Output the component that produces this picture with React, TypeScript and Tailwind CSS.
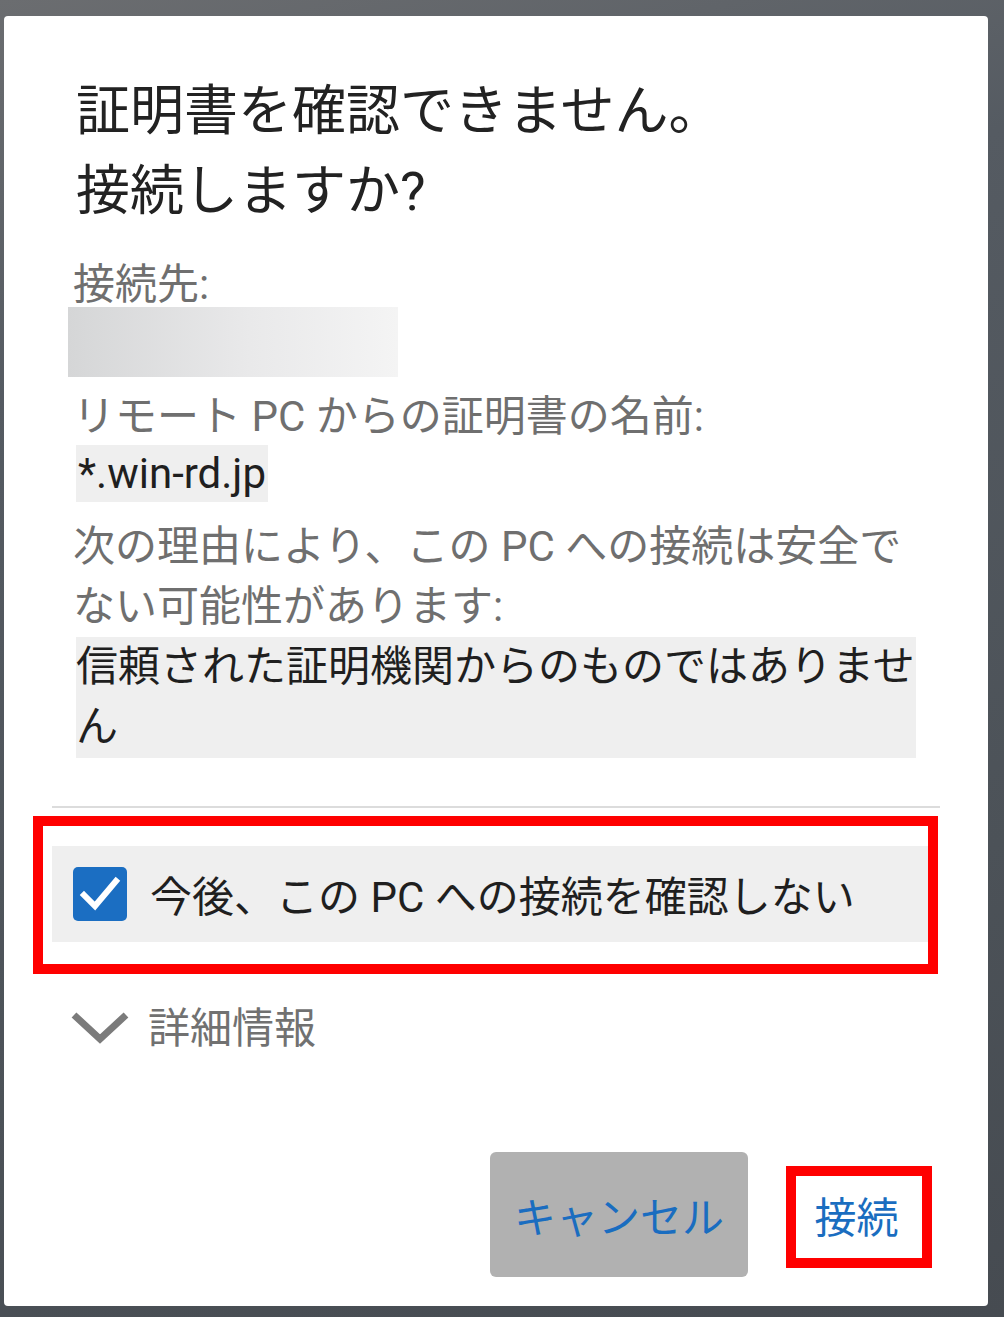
const font = { fontFamily: 'Roboto, "Noto Sans CJK JP", sans-serif' };

function CheckIcon() {
  return (
    <svg width="54" height="54" viewBox="0 0 54 54">
      <rect x="0" y="0" width="54" height="54" rx="5" fill="#1b6ec2" />
      <polyline points="11,28 22,39 43,14" fill="none" stroke="#fff" strokeWidth="6" strokeLinecap="square" />
    </svg>
  );
}

function Chevron() {
  return (
    <svg width="60" height="34" viewBox="0 0 60 34">
      <polyline points="4,5 30,29 56,5" fill="none" stroke="#7b7b7b" strokeWidth="7" />
    </svg>
  );
}

export default function App() {
  return (
    <div
      className="w-[1004px] h-[1317px] pt-[16px] pl-[4px] bg-[linear-gradient(165deg,#6b6d70,#555b62_25%,#4c5258_70%,#464b51)]"
      style={font}
    >
      <div className="w-[984px] h-[1290px] bg-white rounded-[4px] flex flex-col">
        <div className="pt-[56px] px-[72px]">
          <h1 className="text-[54px] leading-[80px] text-[#222222] font-normal">
            証明書を確認できません。
            <br />
            接続しますか?
          </h1>

          <div className="mt-[31px] -ml-[3px] text-[42px] leading-[44px] text-[#6f6f6f]">接続先:</div>
          <div className="-ml-[8px] w-[330px] h-[70px] bg-[linear-gradient(90deg,#d5d6d7,#e9e9ea_55%,#f4f4f4)]" />

          <div className="mt-[12px] -ml-[3px] text-[42px] leading-[56px] text-[#6f6f6f]">リモート PC からの証明書の名前:</div>
          <div className="inline-block h-[57px] px-[2px] bg-[#efefef] text-[42px] leading-[57px] text-[#1f1f1f]">*.win-rd.jp</div>

          <div className="mt-[15px] -ml-[3px] text-[42px] leading-[60px] text-[#6f6f6f]">
            次の理由により、この PC への接続は安全でない可能性があります:
          </div>
          <div className="bg-[#efefef] text-[42px] leading-[60px] text-[#1f1f1f] pb-[1px]">
            信頼された証明機関からのものではありません
          </div>
        </div>

        <div className="mt-[48px] mx-[48px] h-[2px] bg-[#dcdcdc]" />

        <div className="relative mt-[38px] ml-[48px] mr-[54px] h-[96px] bg-[#efefef] flex items-center">
          <div className="ml-[21px]">
            <CheckIcon />
          </div>
          <span className="ml-[23px] pt-[6px] text-[42px] text-[#1f1f1f]">今後、この PC への接続を確認しない</span>
          <div className="absolute -left-[19px] -top-[30px] w-[905px] h-[158px] border-[10px] border-[#ff0000]" />
        </div>

        <div className="mt-[55px] ml-[66px] h-[60px] flex items-center">
          <Chevron />
          <span className="ml-[18px] pt-[2px] text-[42px] text-[#717171]">詳細情報</span>
        </div>

        <div className="mt-auto pb-[29px] pr-[46px] flex justify-end items-center gap-[23px]">
          <button className="w-[258px] h-[125px] pt-[8px] rounded-[6px] bg-[#b1b1b1] text-[42px] text-[#1a6dc0]">キャンセル</button>
          <button className="relative w-[171px] h-[125px] pt-[8px] text-[42px] text-[#1a6dc0]">
            接続
            <span className="absolute left-[15px] top-[14px] w-[146px] h-[102px] border-[10px] border-[#ff0000]" />
          </button>
        </div>
      </div>
    </div>
  );
}
